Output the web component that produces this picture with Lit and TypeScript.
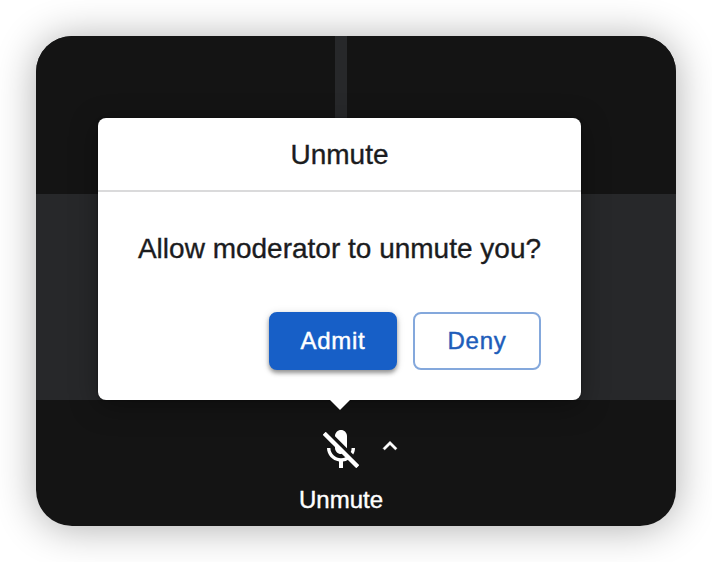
import { LitElement, html, css } from "lit";
import { customElement, property } from "lit/decorators.js";

@customElement("permission-dialog")
class PermissionDialog extends LitElement {
  @property() heading = "";
  @property() message = "";

  static styles = css`
    :host {
      display: block;
      box-sizing: border-box;
      width: 483px;
      height: 282px;
      border-radius: 8px;
      background: #fff;
      color: #1b1c1e;
      box-shadow: 0 6px 28px rgba(0, 0, 0, 0.34), 0 0 2px rgba(0, 0, 0, 0.5);
      -webkit-text-stroke: 0.35px currentColor;
    }
    .header {
      box-sizing: border-box;
      height: 74px;
      border-bottom: 2px solid #dadadb;
      font-size: 28px;
      line-height: 74px;
      text-align: center;
    }
    .message {
      margin: 41px 0 0;
      font-size: 28px;
      line-height: 32px;
      text-align: center;
      white-space: nowrap;
    }
    .actions {
      display: flex;
      justify-content: flex-end;
      gap: 16px;
      padding: 47px 40px 0;
    }
    .button {
      box-sizing: border-box;
      width: 128px;
      height: 58px;
      padding: 0;
      border: 2px solid #84a8dc;
      border-radius: 8px;
      background: #fff;
      color: #1e5dba;
      font: 24px/54px "Liberation Sans", Arial, sans-serif;
      letter-spacing: 0.7px;
      -webkit-text-stroke: 0.45px currentColor;
    }
    .primary {
      border-color: #175fc7;
      background: #175fc7;
      color: #fff;
      box-shadow: 0 3px 4px rgba(0, 0, 0, 0.38), 0 1px 8px rgba(0, 0, 0, 0.12);
    }
    .tip {
      position: absolute;
      top: 100%;
      left: 232px;
      width: 20px;
      height: 10px;
      background: #fff;
      clip-path: polygon(0 0, 100% 0, 50% 100%);
    }
  `;

  render() {
    return html`
      <div class="header">${this.heading}</div>
      <p class="message">${this.message}</p>
      <div class="actions">
        <button class="button primary">Admit</button>
        <button class="button">Deny</button>
      </div>
      <div class="tip"></div>
    `;
  }
}

@customElement("app-root")
class AppRoot extends LitElement {
  static styles = css`
    :host {
      display: block;
      box-sizing: border-box;
      height: 562px;
      padding: 36px;
      overflow: hidden;
      background: #fff;
      font-family: "Liberation Sans", Arial, sans-serif;
    }
    .window {
      position: relative;
      display: grid;
      grid-template-rows: 158px 206px 126px;
      width: 640px;
      height: 490px;
      border-radius: 36px;
      box-shadow: 0 2px 40px rgba(0, 0, 0, 0.32);
    }
    .tiles {
      display: grid;
      grid-template-columns: 299px 1fr;
      gap: 12px;
      background: #27282a;
      border-radius: 36px 36px 0 0;
      overflow: hidden;
    }
    .tile {
      background: #141414;
    }
    .stage {
      background: #27282a;
    }
    .toolbar {
      display: grid;
      grid-template-columns: 48px 28px;
      grid-template-rows: 48px 28px;
      column-gap: 11px;
      row-gap: 12px;
      padding: 26px 0 0 281px;
      box-sizing: border-box;
      border-radius: 0 0 36px 36px;
      background: #141414;
      color: #fff;
    }
    .mic {
      width: 48px;
      height: 48px;
      fill: currentColor;
    }
    .slash {
      stroke: currentColor;
      stroke-width: 2.1;
    }
    .chevron {
      width: 28px;
      height: 28px;
      margin-top: 6px;
      fill: currentColor;
      stroke: currentColor;
      stroke-width: 0.4;
    }
    .label {
      justify-self: center;
      font-size: 24px;
      line-height: 28px;
      white-space: nowrap;
      -webkit-text-stroke: 0.4px currentColor;
    }
    permission-dialog {
      position: absolute;
      top: 82px;
      left: 62px;
    }
  `;

  render() {
    return html`
      <div class="window">
        <div class="tiles">
          <div class="tile"></div>
          <div class="tile"></div>
        </div>
        <div class="stage"></div>
        <permission-dialog
          heading="Unmute"
          message="Allow moderator to unmute you?"
        ></permission-dialog>
        <div class="toolbar">
          <svg class="mic" viewBox="0 0 24 24">
            <path d="M19 11h-1.7c0 .74-.16 1.43-.43 2.05l1.23 1.23c.56-.98.9-2.09.9-3.28zm-4.02.17c0-.06.02-.11.02-.17V5c0-1.66-1.34-3-3-3S9 3.34 9 5v.18l5.98 5.99zM4.27 3L3 4.27l6.01 6.01V11c0 1.66 1.33 3 2.99 3 .22 0 .44-.03.65-.08l1.66 1.66c-.71.33-1.5.52-2.31.52-2.76 0-5.3-2.1-5.3-5.1H5c0 3.41 2.72 6.23 6 6.72V21h2v-3.28c.91-.13 1.77-.45 2.54-.9L19.73 21 21 19.73 4.27 3z"></path>
            <line class="slash" x1="3.7" y1="3.7" x2="20.3" y2="20.3"></line>
          </svg>
          <svg class="chevron" viewBox="0 0 24 24">
            <path d="M7.41 15.41L12 10.83l4.59 4.58L18 14l-6-6-6 6z"></path>
          </svg>
          <span class="label">Unmute</span>
        </div>
      </div>
    `;
  }
}
